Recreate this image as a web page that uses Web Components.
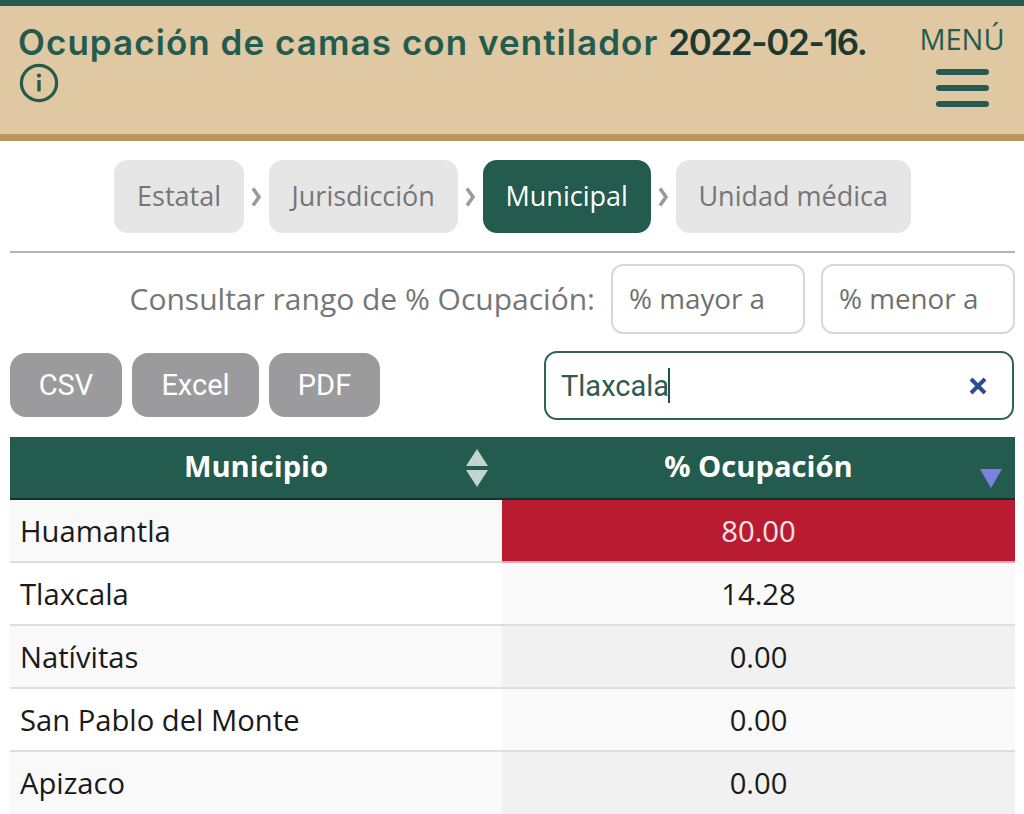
<!DOCTYPE html>
<html lang="es">
<head>
<meta charset="utf-8">
<title>Ocupación de camas con ventilador</title>
<style>
  html, body { margin: 0; height: 814px; overflow: hidden; background: #fff; }
  body { font-family: "Open Sans", "Liberation Sans", sans-serif; }
</style>
</head>
<body>
<app-header></app-header>
<level-nav></level-nav>
<range-filter></range-filter>
<table-tools></table-tools>
<occupation-table></occupation-table>

<script>
class AppHeader extends HTMLElement {
  constructor() {
    super();
    this.attachShadow({ mode: "open" });
  }
  connectedCallback() {
    this.shadowRoot.innerHTML = `
      <style>
        :host { display: flex; box-sizing: border-box; height: 141px; padding: 0 18px 0 18px;
          background: #dfc8a2; border-top: 6px solid #235b4e; border-bottom: 7px solid #bc955c;
          justify-content: space-between; }
        .title { width: 880px; padding-top: 14px; }
        h1 { margin: 0; font: 600 35px/44px Inter, "Open Sans", sans-serif; letter-spacing: 1.05px; color: #235b4e; white-space: nowrap; }
        b { font-weight: 600; color: #1c3a31; letter-spacing: -1.35px; }
        svg { display: block; }
        .info { margin: -1px 0 0 1px; }
        .menu { width: 88px; padding-top: 17px; display: flex; flex-direction: column; align-items: center;
          color: #235b4e; font-size: 29px; line-height: 32px; }
        .bars { margin-top: 14px; width: 53px; display: flex; flex-direction: column; gap: 10px; }
        .bars i { display: block; height: 6px; border-radius: 3px; background: #235b4e; }
      </style>
      <div class="title">
        <h1>Ocupación de camas con ventilador <b>2022-02-16.</b></h1>
        <svg class="info" width="40" height="40" viewBox="0 0 40 40" fill="none">
          <circle cx="20" cy="20" r="17.6" stroke="#235b4e" stroke-width="3.2"/>
          <circle cx="20" cy="12.6" r="2.1" fill="#235b4e"/>
          <rect x="18.3" y="17" width="3.4" height="11.4" rx="1" fill="#235b4e"/>
        </svg>
      </div>
      <div class="menu">
        <span>MENÚ</span>
        <div class="bars"><i></i><i></i><i></i></div>
      </div>`;
  }
}

class LevelNav extends HTMLElement {
  constructor() {
    super();
    this.attachShadow({ mode: "open" });
  }
  connectedCallback() {
    const levels = ["Estatal", "Jurisdicción", "Municipal", "Unidad médica"];
    const chevron = `<svg width="25" height="20" viewBox="0 0 25 20" fill="none"><path d="M9 1.5 L15 10 L9 18.5" stroke="#9b9b9b" stroke-width="3.6"/></svg>`;
    this.shadowRoot.innerHTML = `
      <style>
        :host { display: flex; justify-content: center; align-items: center; margin: 19px 9px 0 10px; height: 73px;
          padding-bottom: 18px; border-bottom: 2px solid #b4b4b4; }
        span { display: block; height: 73px; line-height: 72px; padding: 0 22.8px; border-radius: 14px; background: #e6e6e6;
          color: #767676; font-size: 27px; white-space: nowrap; }
        span.on { background: #235b4e; color: #fff; }
      </style>
      ${levels.map(l => `<span class="${l === "Municipal" ? "on" : ""}">${l}</span>`).join(chevron)}`;
  }
}

class RangeFilter extends HTMLElement {
  constructor() {
    super();
    this.attachShadow({ mode: "open" });
  }
  connectedCallback() {
    this.shadowRoot.innerHTML = `
      <style>
        :host { display: flex; justify-content: flex-end; align-items: center; gap: 16px; margin: 11px 9px 0 10px; height: 70px;
          color: #767676; font-size: 27.8px; }
        div { box-sizing: border-box; width: 194px; height: 70px; line-height: 65px; padding-left: 16px;
          border: 2px solid #d8d8d8; border-radius: 12px; color: #6f6f6f; }
        label { font-size: 30px; padding-bottom: 2px; }
      </style>
      <label>Consultar rango de % Ocupación:</label>
      <div>% mayor a</div>
      <div>% menor a</div>`;
  }
}

class TableTools extends HTMLElement {
  constructor() {
    super();
    this.attachShadow({ mode: "open" });
  }
  connectedCallback() {
    this.shadowRoot.innerHTML = `
      <style>
        :host { display: flex; justify-content: space-between; align-items: center; margin: 17px 10px 0 10px; height: 69px;
          font-family: Roboto, "Liberation Sans", sans-serif; font-size: 29px; }
        .btns { display: flex; gap: 10px; margin-bottom: 2px; }
        .btns span { display: block; height: 64px; line-height: 64px; text-align: center; border-radius: 16px; background: #9b9b9d; color: #fff; }
        .search { box-sizing: border-box; width: 470px; height: 69px; padding: 0 24px 0 15px; display: flex; align-items: center; justify-content: space-between;
          border: 2px solid #2f6357; border-radius: 13px; color: #2f5a50; }
        .text { display: flex; align-items: center; }
        .text i { display: block; width: 2px; height: 35px; margin-left: -1px; background: #1f5247; }
        svg { display: block; }
      </style>
      <div class="btns">
        <span style="width:112px">CSV</span>
        <span style="width:127px">Excel</span>
        <span style="width:111px">PDF</span>
      </div>
      <div class="search">
        <div class="text">Tlaxcala<i></i></div>
        <svg width="20" height="20" viewBox="0 0 20 20"><path d="M3 3 L17 17 M17 3 L3 17" stroke="#2c4f8c" stroke-width="4"/></svg>
      </div>`;
  }
}

class OccupationTable extends HTMLElement {
  constructor() {
    super();
    this.attachShadow({ mode: "open" });
  }
  connectedCallback() {
    const rows = [
      ["Huamantla", "80.00"],
      ["Tlaxcala", "14.28"],
      ["Natívitas", "0.00"],
      ["San Pablo del Monte", "0.00"],
      ["Apizaco", "0.00"]
    ];
    this.shadowRoot.innerHTML = `
      <style>
        :host { display: grid; grid-template-columns: 492px 513px; grid-auto-rows: 63px; margin: 17px 9px 0 10px; font-size: 29.2px; color: #1a1a1a; }
        .th { position: relative; box-sizing: border-box; height: 63px; line-height: 59px; padding-bottom: 2px; text-align: center; font-weight: 700;
          background: #235b4e; color: #fff; border-bottom: 2px solid #13322b; }
        .th svg { position: absolute; }
        .td { box-sizing: border-box; height: 63px; line-height: 62px; border-bottom: 2px solid #dedede; white-space: nowrap; }
        .td:nth-last-child(-n+2) { border-bottom-color: transparent; }
        .name { padding-left: 10px; }
        .val { text-align: center; }
        .odd.name { background: #f9f9f9; }
        .odd.val { background: #f1f1f1; }
        .even.name { background: #fff; }
        .even.val { background: #fafafa; }
        .val.red { background: #b91c31; color: #fbe4e7; border-bottom-color: #e8a6b0; }
      </style>
      <div class="th">Municipio
        <svg style="left:455px;top:11px" width="24" height="40" viewBox="0 0 24 40"><path d="M12 1 L23 18 H1 Z M1 22 H23 L12 39 Z" fill="#c3d3cd"/></svg>
      </div>
      <div class="th">% Ocupación
        <svg style="left:478px;top:31px" width="22" height="20" viewBox="0 0 22 20"><path d="M0 1 H22 L11 20 Z" fill="#7f80de"/></svg>
      </div>
      ${rows.map((r, i) => {
        const band = i % 2 ? "even" : "odd";
        return `<div class="td name ${band}">${r[0]}</div><div class="td val ${band}${i === 0 ? " red" : ""}">${r[1]}</div>`;
      }).join("")}`;
  }
}

customElements.define("app-header", AppHeader);
customElements.define("level-nav", LevelNav);
customElements.define("range-filter", RangeFilter);
customElements.define("table-tools", TableTools);
customElements.define("occupation-table", OccupationTable);
</script>
</body>
</html>
